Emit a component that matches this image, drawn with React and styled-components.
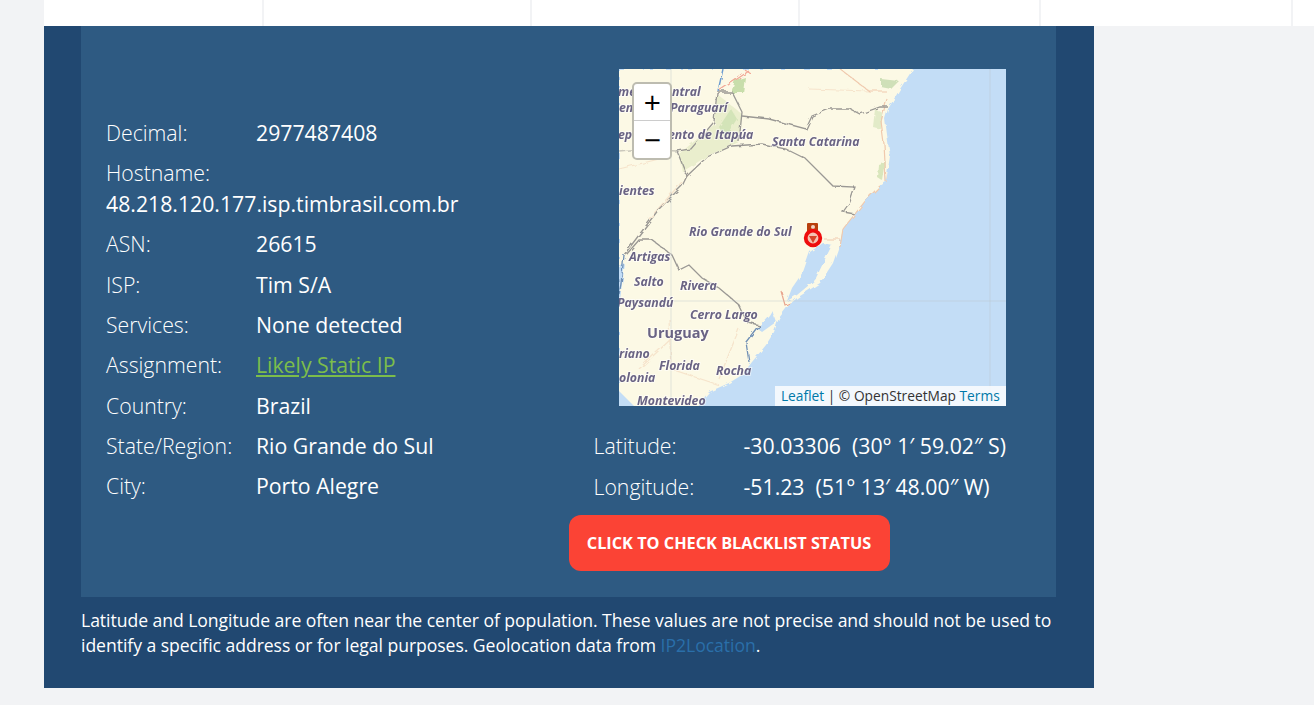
import styled, { createGlobalStyle } from "styled-components";

const GlobalStyle = createGlobalStyle`
    html, body {
        margin: 0;
        padding: 0;
        background: #f2f3f5;
        font-family: "Open Sans", "Liberation Sans", sans-serif;
    }
`;

const Page = styled.div`
    width: 1314px;
    height: 705px;
    overflow: hidden;
`;

const TopStrip = styled.div`
    display: flex;
    height: 26px;
    margin-left: 44px;
    background: #fff;
`;

const StripCell = styled.div`
    width: ${(p) => p.$width}px;
    box-sizing: border-box;
    border-right: 2px solid #f2f3f5;
`;

const Card = styled.div`
    width: 1050px;
    height: 662px;
    margin-left: 44px;
    background: #214871;
    padding: 0 38px 0 37px;
    box-sizing: border-box;
`;

const Panel = styled.div`
    display: grid;
    grid-template-columns: 1fr 1fr;
    height: 571px;
    background: #2e5a82;
`;

const LeftCol = styled.div`
    padding: 92px 25px 0;
`;

const RightCol = styled.div`
    padding-top: 43px;
`;

const Row = styled.div`
    display: flex;
    flex-wrap: wrap;
    font-size: 21.25px;
    line-height: 30.4px;
    margin-bottom: 9.98px;
    color: #fff;
`;

const Label = styled.span`
    width: 150px;
    font-weight: 300;
`;

const Value = styled.span`
    font-weight: 400;
`;

const StatusLink = styled.a`
    color: #7cbd4b;
    text-decoration: underline;
`;

const GeoRows = styled.div`
    margin-top: 25px;
    padding-left: 25px;
    & > div:last-child {
        padding-top: 0.6px;
    }
`;

const MapBox = styled.div`
    position: relative;
    width: 387px;
    height: 337px;
    margin: 0 auto;
    overflow: hidden;
    background: #c3ddf6;
`;

const MapControl = styled.div`
    position: absolute;
    top: 13px;
    left: 13px;
    width: 40px;
    height: 78px;
    box-sizing: border-box;
    border: 2px solid #bdbcb0;
    border-radius: 5px;
    overflow: hidden;
    background: #fff;
`;

const ZoomButton = styled.div`
    display: flex;
    align-items: center;
    justify-content: center;
    height: 37px;
    padding-left: 1px;
    box-sizing: border-box;
    color: #000;
    font-size: 30px;
    font-weight: 400;
    line-height: 1;
    &:first-child {
        border-bottom: 1px solid #ccc;
    }
`;

const Attribution = styled.div`
    position: absolute;
    right: 0;
    bottom: 0;
    height: 20px;
    padding: 0 6px;
    background: rgba(255, 255, 255, 0.8);
    color: #333;
    font-size: 13.75px;
    line-height: 20px;
    white-space: nowrap;
`;

const MapLink = styled.a`
    color: #0078a8;
`;

const ActionButton = styled.button`
    display: block;
    width: 321px;
    height: 56px;
    margin-top: 13px;
    padding: 0;
    border: none;
    border-radius: 12px;
    background: #fb4335;
    color: #fff;
    font-family: inherit;
    font-size: 16.3px;
    font-weight: 700;
`;

const Note = styled.p`
    margin: 0;
    padding-top: 11px;
    color: #fff;
    font-size: 17.6px;
    line-height: 25px;
    letter-spacing: -0.05px;
`;

const NoteLink = styled.a`
    color: #2a6fa9;
`;

const MapLabel = styled.text`
    font-family: "Open Sans", sans-serif;
    font-size: ${(p) => p.$size || 12.3}px;
    font-weight: 700;
    font-style: ${(p) => (p.$upright ? "normal" : "italic")};
    fill: #6a6484;
    stroke: rgba(255, 255, 255, 0.55);
    stroke-width: 2px;
    paint-order: stroke;
`;

const labels = [
    ["me", -1, 27],
    ["ntral", 53, 27],
    ["en", 0, 43],
    ["Paraguarí", 51, 43],
    ["ep", -1, 70],
    ["ento de Itapúa", 49, 70],
    ["ientes", 0, 126],
    ["Santa Catarina", 153, 77],
    ["Rio Grande do Sul", 70, 167],
    ["Artigas", 10, 192],
    ["Salto", 15, 217],
    ["Rivera", 61, 221],
    ["Paysandú", -2, 238],
    ["Cerro Largo", 71, 250],
    ["riano", 0, 289],
    ["Florida", 40, 301],
    ["Rocha", 97, 306],
    ["olonia", 0, 313],
    ["Montevideo", 18, 336],
];

// map tile, traced by hand
const MapTile = () => (
    <svg width="387" height="337" viewBox="0 0 387 337">
        <defs>
            <filter id="rough" x="-5%" y="-5%" width="110%" height="110%">
                <feTurbulence type="fractalNoise" baseFrequency="0.13" numOctaves="2" seed="4" />
                <feDisplacementMap in="SourceGraphic" scale="4.5" />
                <feGaussianBlur stdDeviation="0.45" />
            </filter>
            <filter id="soft">
                <feGaussianBlur stdDeviation="0.35" />
            </filter>
        </defs>
        <g filter="url(#rough)">
            <path
                d="M0 0H294L281 20L269 40L266 50L269 73L271 87L267 113L261 117L248 130L236 145L224 160L221 174L214 194L201 214L178 229L170 236L160 249L155 263L147 276L133 293L123 306L110 314L90 323L84 330L80 340H18L0 322Z"
                fill="#fcf9e5"
            />
            <path d="M213 176L208 186L196 211L178 226L168 232L173 219L184 203L191 183L204 174Z" fill="#c3ddf6" />
            <path d="M153 241L157 253L143 263L138 259L150 246Z" fill="#c3ddf6" />
            <path d="M0 240L3 215L6 195L0 198Z" fill="#c3ddf6" />
            <path d="M63 103L60 85L96 55L98 25L123 45L120 73L90 86Z" fill="#eaeecd" />
            <path d="M116 11L126 8L124 24L112 24Z" fill="#c8deab" />
            <path d="M100 58L112 40L118 50L106 68Z" fill="#d3e4b8" />
            <path d="M262 10L280 12L272 20L262 18Z" fill="#cfe0b8" />
            <path d="M256 40L264 44L262 60L254 58Z" fill="#e2ebc8" />
            <path d="M259 95L267 92L264 112L258 108Z" fill="#d9e6bc" />
            <g stroke="#f0c9ad" strokeWidth="1.2" fill="none">
                <path d="M221 170L205 170M261 117L248 130L224 160M267 113L265 75L262 52L268 30M221 0L250 22L268 22M224 160L221 178" />
                <path d="M0 100L40 90M70 105L30 150M190 20L250 22M50 250L52 300L100 316M52 270L20 300M120 260L100 310" strokeOpacity="0.45" />
                <path d="M162 222L166 236L171 234" stroke="#e8a58e" />
            </g>
            <path d="M100 22L130 2M125 0L132 5" stroke="#f2a795" strokeWidth="1.2" fill="none" />
            <path d="M104 0L99 22" stroke="#6a9bd0" strokeWidth="1.4" fill="none" />
            <g stroke="#9a9894" strokeWidth="1.3" fill="none">
                <path d="M98 23L113 23L123 43L120 73" />
                <path d="M98 23L95 53L72 80L58 82L68 107L63 117L40 140L20 166L5 186" />
                <path d="M68 107L88 88L113 77L143 75L167 80L187 90L204 107L214 117L236 118L231 133L224 143L236 145" />
                <path d="M123 47L150 50L187 60L193 47L211 40L231 40L241 45L261 38L269 38" />
                <path d="M7 186L20 171L33 171L53 186L60 201L70 196L83 209L100 219L120 236L128 253L140 256" />
                <path d="M0 82L20 80L58 82" strokeOpacity="0.5" />
            </g>
            <path d="M140 256L127 273L130 293" stroke="#6f8fb5" strokeWidth="1.3" fill="none" />
            <path d="M5 186L2 215L0 225" stroke="#6f8fb5" strokeWidth="1.3" fill="none" />
        </g>
        <path d="M52 0V337M371 0V337M0 232H387" stroke="#b9c4c8" strokeOpacity="0.4" fill="none" />
        <g filter="url(#soft)">
            {labels.map(([text, x, y]) => (
                <MapLabel key={text} x={x} y={y}>
                    {text}
                </MapLabel>
            ))}
            <MapLabel x="28" y="269" $size={14.5} $upright>
                Uruguay
            </MapLabel>
            <rect x="188" y="154" width="11" height="10" rx="1" fill="#b8400f" />
            <circle cx="194" cy="158" r="2" fill="#f3d5c5" />
            <circle cx="194" cy="169" r="7.3" fill="#f5c2b2" stroke="#ee1111" strokeWidth="3.8" />
            <path d="M190 167H198L194 174Z" fill="#d6452a" />
        </g>
    </svg>
);

const App = () => {
    return (
        <Page>
            <GlobalStyle />
            <TopStrip>
                <StripCell $width={220} />
                <StripCell $width={268} />
                <StripCell $width={268} />
                <StripCell $width={241} />
                <StripCell $width={252} />
            </TopStrip>
            <Card>
                <Panel>
                    <LeftCol>
                        <Row>
                            <Label>Decimal:</Label>
                            <Value>2977487408</Value>
                        </Row>
                        <Row>
                            <Label>Hostname:</Label>
                            <Value>48.218.120.177.isp.timbrasil.com.br</Value>
                        </Row>
                        <Row>
                            <Label>ASN:</Label>
                            <Value>26615</Value>
                        </Row>
                        <Row>
                            <Label>ISP:</Label>
                            <Value>Tim S/A</Value>
                        </Row>
                        <Row>
                            <Label>Services:</Label>
                            <Value>None detected</Value>
                        </Row>
                        <Row>
                            <Label>Assignment:</Label>
                            <StatusLink>Likely Static IP</StatusLink>
                        </Row>
                        <Row>
                            <Label>Country:</Label>
                            <Value>Brazil</Value>
                        </Row>
                        <Row>
                            <Label>State/Region:</Label>
                            <Value>Rio Grande do Sul</Value>
                        </Row>
                        <Row>
                            <Label>City:</Label>
                            <Value>Porto Alegre</Value>
                        </Row>
                    </LeftCol>
                    <RightCol>
                        <MapBox>
                            <MapTile />
                            <MapControl>
                                <ZoomButton>+</ZoomButton>
                                <ZoomButton>−</ZoomButton>
                            </MapControl>
                            <Attribution>
                                <MapLink>Leaflet</MapLink> | © OpenStreetMap <MapLink>Terms</MapLink>
                            </Attribution>
                        </MapBox>
                        <GeoRows>
                            <Row>
                                <Label>Latitude:</Label>
                                <Value>-30.03306&nbsp; (30° 1′ 59.02″ S)</Value>
                            </Row>
                            <Row>
                                <Label>Longitude:</Label>
                                <Value>-51.23&nbsp; (51° 13′ 48.00″ W)</Value>
                            </Row>
                        </GeoRows>
                        <ActionButton>CLICK TO CHECK BLACKLIST STATUS</ActionButton>
                    </RightCol>
                </Panel>
                <Note>
                    Latitude and Longitude are often near the center of population. These values are not precise and should not be used to
                    identify a specific address or for legal purposes. Geolocation data from <NoteLink>IP2Location</NoteLink>.
                </Note>
            </Card>
        </Page>
    );
};

export default App;
